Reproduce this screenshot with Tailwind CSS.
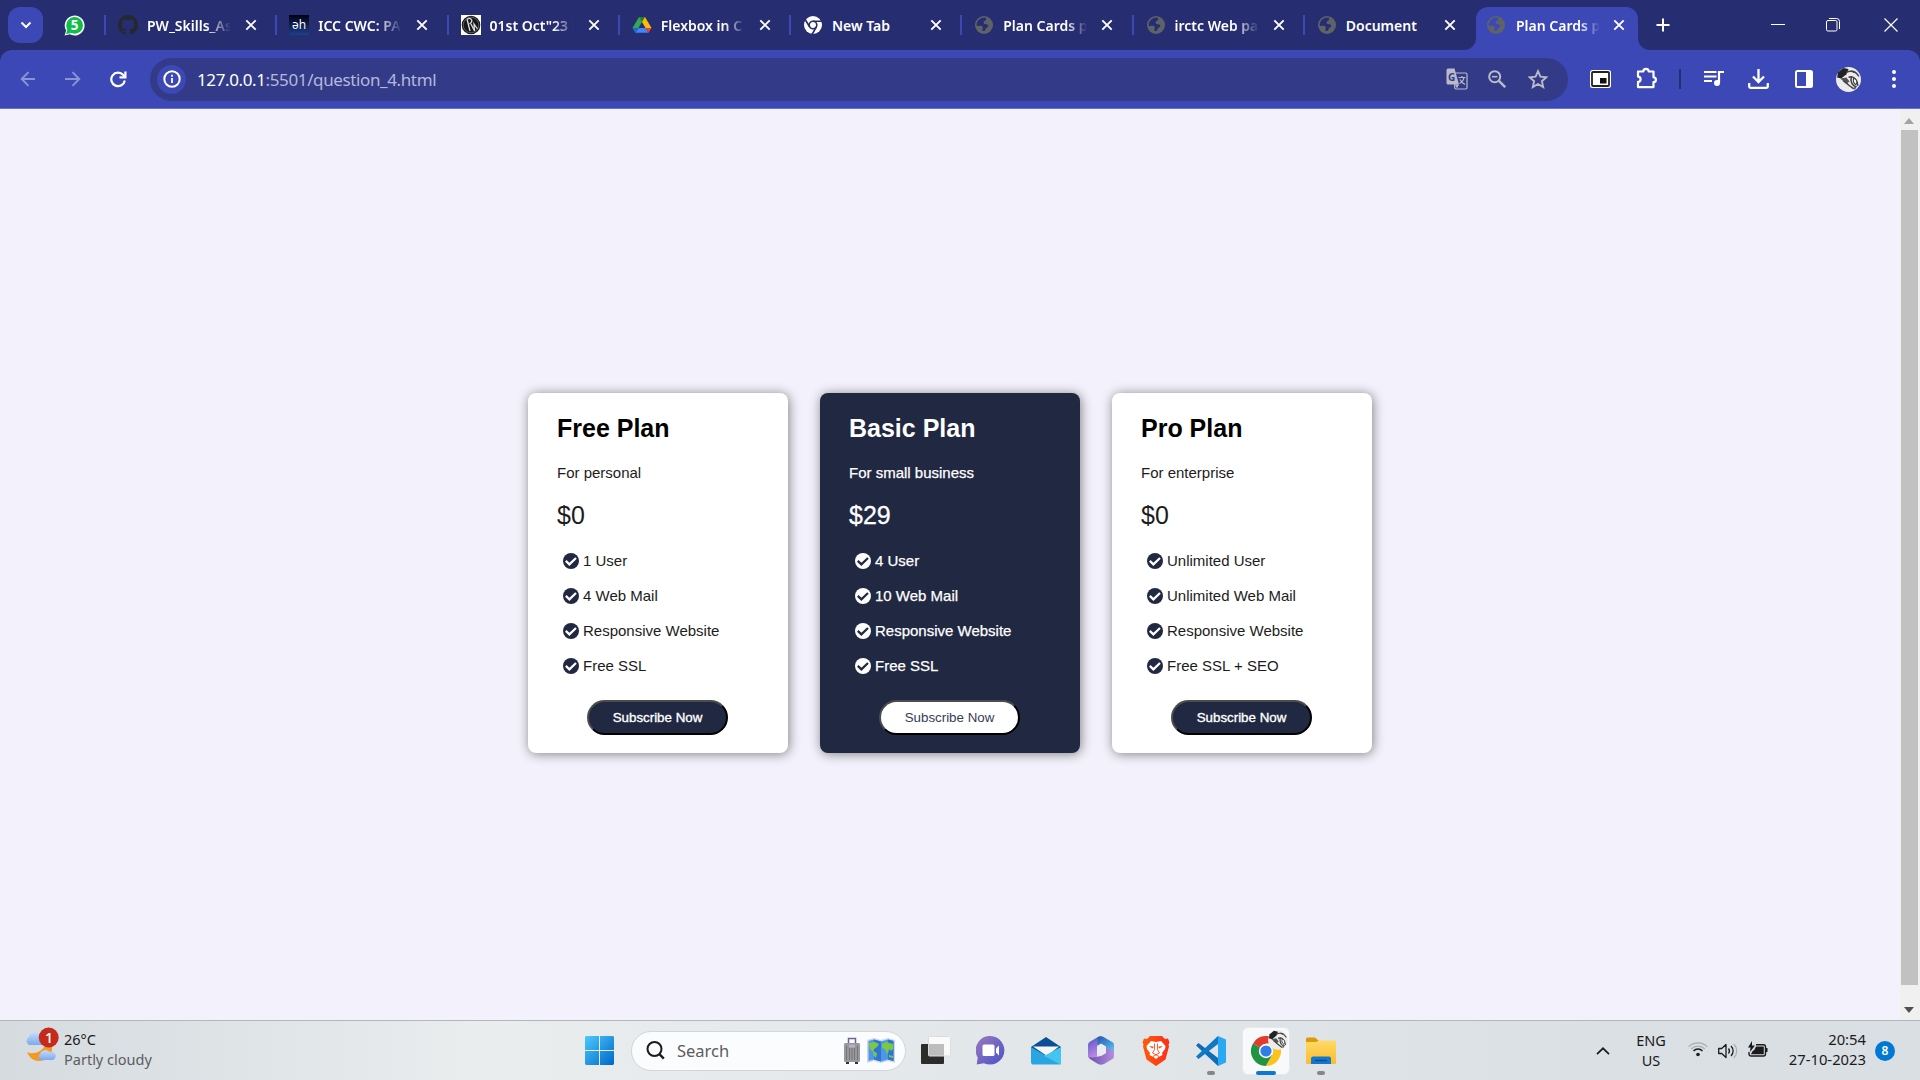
<!DOCTYPE html>
<html lang="en">
<head>
<meta charset="utf-8">
<title>Plan Cards page</title>
<script src="https://cdn.jsdelivr.net/npm/@tailwindcss/browser@4"></script>
</head>
<body class="w-[1920px] h-[1080px] overflow-hidden flex flex-col bg-[#f3f1fc] font-['Noto_Sans','Open_Sans',sans-serif]">

<svg class="hidden">
  <symbol id="x" viewBox="0 0 14 14"><path d="M2.300 2.300l9.400 9.400M11.700 2.300L2.300 11.700" stroke="#fff" stroke-width="1.900" fill="none"/></symbol>
  <symbol id="globe" viewBox="0 0 20 20"><circle cx="10" cy="10" r="9" fill="#5f6368"/><path d="M10 2.600a7.400 7.400 0 0 0-7.300 8.200c1.600.6 3-.3 4.800.2 1.500.4 1.700 1.700 1 2.900-.5.9-.3 1.900.9 2.100 1.600.2 2-1 2.300-2.200.4-1.500 2.300-1 2.600-2.700.2-1.400-.9-1.800-2.300-1.900-1.800-.1-2.600-.7-2.400-2 .2-1.200 1.800-1.100 2.400-2.100.4-.8.1-1.700-.3-2.300z" fill="var(--land)"/></symbol>
  <symbol id="check" viewBox="0 0 16 16"><circle cx="8" cy="8" r="8" fill="currentColor"/><path d="M2.800 7.900l3.600 3.500L13 5" fill="none" stroke="var(--tick)" stroke-width="2.200"/></symbol>
  <symbol id="ball" viewBox="0 0 24 24"><circle cx="12" cy="12" r="12" fill="#ececec"/><path d="M2 5l5-4 5 1-2 5-5 4-4-1z" fill="#222"/><path d="M4 11l6-1 3 4-3 2zM14 3l5 1-2 2zM17 20l4-3-3 5z" fill="#555"/><path d="M10 5c4-2 9-1 12 4M12 10c4-2 8 1 9 8M15 9c-2 5 1 9 4 10M7 13l6 5 4 3" fill="none" stroke="#444" stroke-width="1.500"/><path d="M17 11c3 0 4 4 2 6-2-1-3-4-2-6z" fill="#fff" stroke="#333"/></symbol>
</svg>

<!-- Tab strip -->
<header class="h-[50px] shrink-0 bg-[#262d70] flex text-white text-[14px] font-semibold [--land:#262d70]">
  <div class="w-[104px] flex items-center pl-2">
    <div class="w-[35px] h-9 rounded-xl bg-[#3b48b6] flex items-center justify-center"><svg class="w-3 h-3" viewBox="0 0 12 12"><path d="M1.500 3.500L6 8l4.500-4.500" fill="none" stroke="#fff" stroke-width="2"/></svg></div>
    <svg class="w-[21px] h-[21px] ml-[21px]" viewBox="0 0 21 21"><path d="M10.500.5a10 10 0 1 1-4.700 18.800L.6 20.500l1.500-4.900A10 10 0 0 1 10.500.5z" fill="#fff"/><circle cx="10.600" cy="10.400" r="8.400" fill="#12bd4a"/><path d="M2 19l1.500-5 4 4z" fill="#12bd4a"/><text x="10.600" y="15.300" font-size="13.500" font-weight="700" text-anchor="middle" fill="#fff" font-family="Open Sans">5</text></svg>
  </div>
  <div class="w-[171.25px] flex items-center"><i class="w-[2px] h-5 bg-[#3b48b6]"></i>
    <svg class="w-5 h-5 ml-3" viewBox="0 0 16 16"><path fill="#24292f" d="M8 0C3.580 0 0 3.580 0 8c0 3.540 2.290 6.530 5.470 7.590.4.070.55-.17.55-.38v-1.330c-2.230.48-2.700-1.070-2.700-1.070-.36-.92-.89-1.170-.89-1.170-.73-.5.050-.49.050-.49.800.06 1.230.83 1.230.83.720 1.220 1.870.87 2.330.66.070-.52.280-.87.510-1.070-1.780-.2-3.640-.89-3.640-3.950 0-.87.310-1.590.82-2.150-.08-.2-.36-1.020.08-2.120 0 0 .67-.21 2.200.82a7.600 7.600 0 0 1 4 0c1.530-1.040 2.200-.82 2.200-.82.440 1.100.160 1.920.080 2.120.510.560.820 1.270.820 2.150 0 3.070-1.870 3.750-3.650 3.950.290.250.540.730.540 1.480v2.160c0 .21.150.46.550.38A8 8 0 0 0 8 0z"/></svg>
    <span class="ml-[9px] w-[84px] overflow-hidden whitespace-nowrap mask-r-from-70% mask-r-to-100%">PW_Skills_As</span><svg class="w-[14px] h-[14px] ml-[13px]"><use href="#x"/></svg></div>
  <div class="w-[171.25px] flex items-center"><i class="w-[2px] h-5 bg-[#3b48b6]"></i>
    <svg class="w-5 h-5 ml-3" viewBox="0 0 20 20"><defs><linearGradient id="dh" x2="0" y2="1"><stop stop-color="#000016"/><stop offset="1" stop-color="#1d3f8a"/></linearGradient></defs><rect width="20" height="20" fill="url(#dh)"/><text x="10" y="14" font-size="12" font-weight="400" text-anchor="middle" fill="#fff" font-family="Open Sans">əh</text></svg>
    <span class="ml-[9px] w-[84px] overflow-hidden whitespace-nowrap mask-r-from-70% mask-r-to-100%">ICC CWC: PA</span><svg class="w-[14px] h-[14px] ml-[13px]"><use href="#x"/></svg></div>
  <div class="w-[171.25px] flex items-center"><i class="w-[2px] h-5 bg-[#3b48b6]"></i>
    <svg class="w-5 h-5 ml-3" viewBox="0 0 20 20"><rect width="20" height="20" fill="#fff"/><circle cx="10" cy="10" r="9.300" fill="#151719"/><path d="M6 4l3 12M6 4c4-2 7 2 2.500 5M10 9l3.500 7L13 9l3.500 5" stroke="#ddd" fill="none" stroke-width="1.300"/><circle cx="10" cy="10" r="7.800" fill="none" stroke="#8a8c8e" stroke-width=".6"/></svg>
    <span class="ml-[9px] w-[84px] overflow-hidden whitespace-nowrap mask-r-from-75% mask-r-to-100%">01st Oct"23 I</span><svg class="w-[14px] h-[14px] ml-[13px]"><use href="#x"/></svg></div>
  <div class="w-[171.25px] flex items-center"><i class="w-[2px] h-5 bg-[#3b48b6]"></i>
    <svg class="w-5 h-5 ml-3" viewBox="0 0 20 20"><path d="M7 2h6l6.500 11h-6z" fill="#fbbc04"/><path d="M7 2L.5 13l3 4.800L10 7z" fill="#34a853"/><path d="M7 2h6l-3 5z" fill="#188038"/><path d="M6.600 13h7l2.900 4.800h-13z" fill="#4285f4"/><path d="M.5 13h6.100l-3.100 4.800z" fill="#1967d2"/><path d="M13.500 13h6l-3 4.800z" fill="#ea4335"/></svg>
    <span class="ml-[9px] w-[84px] overflow-hidden whitespace-nowrap mask-r-from-75% mask-r-to-100%">Flexbox in C</span><svg class="w-[14px] h-[14px] ml-[13px]"><use href="#x"/></svg></div>
  <div class="w-[171.25px] flex items-center"><i class="w-[2px] h-5 bg-[#3b48b6]"></i>
    <svg class="w-5 h-5 ml-3" viewBox="0 0 20 20"><circle cx="10" cy="10" r="9" fill="#fff"/><circle cx="10" cy="10" r="3.800" fill="none" stroke="#262d70" stroke-width="1.600"/><path d="M10 6.200h9M6.700 12L2.200 4.500M13.300 12L9 19.500" stroke="#262d70" stroke-width="1.600"/></svg>
    <span class="ml-[9px] w-[84px] whitespace-nowrap">New Tab</span><svg class="w-[14px] h-[14px] ml-[13px]"><use href="#x"/></svg></div>
  <div class="w-[171.25px] flex items-center"><i class="w-[2px] h-5 bg-[#3b48b6]"></i>
    <svg class="w-5 h-5 ml-3"><use href="#globe"/></svg>
    <span class="ml-[9px] w-[84px] overflow-hidden whitespace-nowrap mask-r-from-75% mask-r-to-100%">Plan Cards p</span><svg class="w-[14px] h-[14px] ml-[13px]"><use href="#x"/></svg></div>
  <div class="w-[171.25px] flex items-center"><i class="w-[2px] h-5 bg-[#3b48b6]"></i>
    <svg class="w-5 h-5 ml-3"><use href="#globe"/></svg>
    <span class="ml-[9px] w-[84px] overflow-hidden whitespace-nowrap mask-r-from-70% mask-r-to-100%">irctc Web pa</span><svg class="w-[14px] h-[14px] ml-[13px]"><use href="#x"/></svg></div>
  <div class="w-[171.25px] flex items-center"><i class="w-[2px] h-5 bg-[#3b48b6]"></i>
    <svg class="w-5 h-5 ml-3"><use href="#globe"/></svg>
    <span class="ml-[9px] w-[84px] whitespace-nowrap">Document</span><svg class="w-[14px] h-[14px] ml-[13px]"><use href="#x"/></svg></div>
  <div class="relative w-[162px] ml-[2px] mt-[7px] h-[43px] pb-[7px] rounded-t-xl bg-[#3b48b6] flex items-center [--land:#3b48b6]">
    <svg class="absolute -left-3 bottom-0 w-3 h-3"><path d="M12 0v12H0A12 12 0 0 0 12 0" fill="#3b48b6"/></svg>
    <svg class="absolute -right-3 bottom-0 w-3 h-3"><path d="M0 0v12h12A12 12 0 0 1 0 0" fill="#3b48b6"/></svg>
    <svg class="w-5 h-5 ml-[10px]"><use href="#globe"/></svg>
    <span class="ml-[10px] w-[84px] overflow-hidden whitespace-nowrap mask-r-from-75% mask-r-to-100%">Plan Cards p</span><svg class="w-[14px] h-[14px] ml-[12px]"><use href="#x"/></svg></div>
  <svg class="w-[14px] h-[14px] ml-[18px] mt-[18px]" viewBox="0 0 14 14"><path d="M7 .5v13M.5 7h13" stroke="#fff" stroke-width="2"/></svg>
  <svg class="w-[14px] h-[14px] ml-[101px] mt-[18px]" viewBox="0 0 14 14"><path d="M0 6.500h14" stroke="#fff"/></svg>
  <svg class="w-[14px] h-[14px] ml-[41px] mt-[18px]" viewBox="0 0 14 14"><rect x=".5" y="2.500" width="10.500" height="10.500" rx="1.500" fill="none" stroke="#fff"/><path d="M3 .5h7.500a3 3 0 0 1 3 3V11" fill="none" stroke="#fff"/></svg>
  <svg class="w-[14px] h-[14px] ml-[44px] mt-[18px]" viewBox="0 0 14 14"><path d="M.5.5l13 13M13.500.5l-13 13" stroke="#fff" stroke-width="1.200"/></svg>
</header>

<!-- Toolbar -->
<div class="h-[59px] shrink-0 bg-[#262d70]">
<div class="h-[59px] bg-[#3b48b6] rounded-t-xl border-b border-[#6a73c6] flex items-center">
  <svg class="w-4 h-4 ml-5" viewBox="0 0 16 16"><path d="M15 8H2M8.500 1.200L1.700 8l6.800 6.800" fill="none" stroke="#8d94d4" stroke-width="1.900"/></svg>
  <svg class="w-4 h-4 ml-[29px]" viewBox="0 0 16 16"><path d="M0 8h14M7.500 1.200L14.300 8l-6.800 6.800" fill="none" stroke="#8d94d4" stroke-width="1.900"/></svg>
  <svg class="w-[17px] h-[17px] ml-[29px]" viewBox="0 0 17 17"><path d="M14.800 9.500A6.800 6.800 0 1 1 13.300 4L15.500 6" fill="none" stroke="#fff" stroke-width="2.200"/><path d="M16.500.5v7h-7V5.300h4.800V.5z" fill="#fff"/></svg>
  <div class="ml-[23px] w-[1418px] h-[43px] rounded-full bg-[#333b88] flex items-center">
    <div class="ml-[7px] w-[29px] h-[29px] rounded-full bg-[#3b48b6] flex items-center justify-center"><svg class="w-[18px] h-[18px]" viewBox="0 0 18 18"><circle cx="9" cy="9" r="7.700" fill="none" stroke="#fff" stroke-width="2"/><path d="M9 8v5M9 4.800v2" stroke="#fff" stroke-width="1.800"/></svg></div>
    <span class="ml-[11px] mt-[2px] w-[1240px] text-[17px] tracking-[-0.38px] text-[#b4b8dc]"><span class="text-white">127.0.0.1</span>:5501/question_4.html</span>
    <svg class="w-[22px] h-[22px] ml-[9px]" viewBox="0 0 22 22"><rect x="8.700" y="5" width="12.300" height="16" rx="1.200" fill="none" stroke="#b9bbc8" stroke-width="1.200"/><path d="M2 .5h6.500L13 16.500H2A1.500 1.500 0 0 1 .5 15V2A1.500 1.500 0 0 1 2 .5z" fill="#b9bbc8"/><path d="M9 16.500h4l-2 4z" fill="#b9bbc8"/><text x="5.600" y="12.500" font-size="10" font-weight="700" text-anchor="middle" fill="#333b88" font-family="Open Sans">G</text><path d="M12.500 9.500h7M16 8v1.500M18 9.500c-.5 3-2.500 5-4.500 6M14 11.500c1 2 3 4 5 5" stroke="#b9bbc8" stroke-width="1.200" fill="none"/></svg>
    <svg class="w-[18px] h-[18px] ml-[20px]" viewBox="0 0 18 18"><circle cx="6.700" cy="6.700" r="5.500" fill="none" stroke="#b9bbc8" stroke-width="2"/><path d="M4 6.700h5.400" stroke="#b9bbc8" stroke-width="1.600"/><path d="M10.700 10.700l6.500 6.500" stroke="#b9bbc8" stroke-width="2.400"/></svg>
    <svg class="w-5 h-5 ml-[22px]" viewBox="0 0 20 20"><path d="M10 2.200l2.400 5.500 6 .5-4.500 4 1.300 5.900L10 15l-5.200 3.100 1.300-5.900-4.500-4 6-.5z" fill="none" stroke="#b9bbc8" stroke-width="1.900"/></svg>
  </div>
  <svg class="w-[21px] h-[18px] ml-[22px]" viewBox="0 0 21 18"><rect width="21" height="18" rx="2.500" fill="#fff"/><rect x="2" y="2" width="17" height="14" rx="1" fill="#fff" stroke="#222" stroke-width="1.800"/><rect x="10" y="8" width="6.500" height="5.500" fill="#111"/></svg>
  <svg class="w-[22px] h-[22px] ml-[25px] -mt-[2px]" viewBox="0 0 22 22"><path d="M2 4.500h5.300a2.700 2.700 0 1 1 5.400 0h4.800v5.800a2.400 2.400 0 1 1 0 4.800v5H2v-5.300a2.600 2.600 0 0 0 0-5.200z" fill="none" stroke="#fff" stroke-width="2.200" stroke-linejoin="round"/></svg>
  <i class="ml-[21px] w-[2px] h-5 bg-[#262d70]"></i>
  <svg class="w-5 h-[18px] ml-[23px] -mt-[3px]" viewBox="0 0 20 18"><path d="M0 3h12.500M0 7.500h12.500M0 12h8" stroke="#fff" stroke-width="2"/><circle cx="13" cy="14" r="3" fill="#fff"/><path d="M15 14V3h5" stroke="#fff" stroke-width="2.200" fill="none"/></svg>
  <svg class="w-[21px] h-5 ml-[24px]" viewBox="0 0 21 20"><path d="M10.500 0v12M5 7.500l5.500 5.500L16 7.500M1.200 14v3.500c0 .8.500 1.300 1.300 1.300h16c.8 0 1.300-.5 1.300-1.300V14" fill="none" stroke="#fff" stroke-width="2.300"/></svg>
  <svg class="w-[18px] h-[18px] ml-[26px]" viewBox="0 0 18 18"><rect x="1" y="1" width="16" height="16" rx="1.500" fill="none" stroke="#fff" stroke-width="2"/><path d="M11 1h6v16h-6z" fill="#fff"/></svg>
  <svg class="w-[25px] h-[25px] ml-[23px]"><use href="#ball"/></svg>
  <svg class="w-1 h-[18px] ml-[31px]" viewBox="0 0 4 18"><g fill="#fff"><circle cx="2" cy="2" r="2"/><circle cx="2" cy="9" r="2"/><circle cx="2" cy="16" r="2"/></g></svg>
</div>
</div>

<!-- Page -->
<div class="h-[911px] shrink-0 flex">
  <main class="w-[1900px] pt-[284px] flex justify-center items-start gap-8 font-['Liberation_Sans',Arial,sans-serif] text-[15px] text-black">
    <section class="w-[260px] h-[360px] rounded-lg bg-white shadow-[1px_1px_12px_gray] pl-[29px] [--tick:#fff]">
      <h2 class="mt-[21px] text-[25px] leading-7 font-bold">Free Plan</h2>
      <p class="mt-[22px] leading-[18px] text-[#1c1c1c]">For personal</p>
      <p class="mt-[19px] text-[25px] leading-7 text-[#1c1c1c]">$0</p>
      <ul class="mt-[14px] ml-[6px] text-[#1c1c1c]">
        <li class="h-[35px] pt-[2px] flex items-center gap-1"><svg class="w-4 h-4 mb-[2px] text-[#212842]"><use href="#check"/></svg>1 User</li>
        <li class="h-[35px] pt-[2px] flex items-center gap-1"><svg class="w-4 h-4 mb-[2px] text-[#212842]"><use href="#check"/></svg>4 Web Mail</li>
        <li class="h-[35px] pt-[2px] flex items-center gap-1"><svg class="w-4 h-4 mb-[2px] text-[#212842]"><use href="#check"/></svg>Responsive Website</li>
        <li class="h-[35px] pt-[2px] flex items-center gap-1"><svg class="w-4 h-4 mb-[2px] text-[#212842]"><use href="#check"/></svg>Free SSL</li>
      </ul>
      <button class="block mt-[17px] ml-[30px] w-[141px] h-[35px] rounded-[20px] border-2 border-t-[#4c4c4c] border-l-[#4c4c4c] border-r-black border-b-black bg-[#212842] text-white text-[13.333px] [-webkit-text-stroke:0.35px_white]">Subscribe Now</button>
    </section>
    <section class="w-[260px] h-[360px] rounded-lg bg-[#212842] text-white shadow-[1px_1px_12px_gray] pl-[29px] [--tick:#212842]">
      <h2 class="mt-[21px] text-[25px] leading-7 font-bold">Basic Plan</h2>
      <p class="mt-[22px] leading-[18px] [-webkit-text-stroke:0.25px_white]">For small business</p>
      <p class="mt-[19px] text-[25px] leading-7 [-webkit-text-stroke:0.3px_white]">$29</p>
      <ul class="mt-[14px] ml-[6px] [-webkit-text-stroke:0.25px_white]">
        <li class="h-[35px] pt-[2px] flex items-center gap-1"><svg class="w-4 h-4 mb-[2px]"><use href="#check"/></svg>4 User</li>
        <li class="h-[35px] pt-[2px] flex items-center gap-1"><svg class="w-4 h-4 mb-[2px]"><use href="#check"/></svg>10 Web Mail</li>
        <li class="h-[35px] pt-[2px] flex items-center gap-1"><svg class="w-4 h-4 mb-[2px]"><use href="#check"/></svg>Responsive Website</li>
        <li class="h-[35px] pt-[2px] flex items-center gap-1"><svg class="w-4 h-4 mb-[2px]"><use href="#check"/></svg>Free SSL</li>
      </ul>
      <button class="block mt-[17px] ml-[30px] w-[141px] h-[35px] rounded-[20px] border-2 border-t-[#4c4c4c] border-l-[#4c4c4c] border-r-black border-b-black bg-white text-[#363c55] text-[13.333px]">Subscribe Now</button>
    </section>
    <section class="w-[260px] h-[360px] rounded-lg bg-white shadow-[1px_1px_12px_gray] pl-[29px] [--tick:#fff]">
      <h2 class="mt-[21px] text-[25px] leading-7 font-bold">Pro Plan</h2>
      <p class="mt-[22px] leading-[18px] text-[#1c1c1c]">For enterprise</p>
      <p class="mt-[19px] text-[25px] leading-7 text-[#1c1c1c]">$0</p>
      <ul class="mt-[14px] ml-[6px] text-[#1c1c1c]">
        <li class="h-[35px] pt-[2px] flex items-center gap-1"><svg class="w-4 h-4 mb-[2px] text-[#212842]"><use href="#check"/></svg>Unlimited User</li>
        <li class="h-[35px] pt-[2px] flex items-center gap-1"><svg class="w-4 h-4 mb-[2px] text-[#212842]"><use href="#check"/></svg>Unlimited Web Mail</li>
        <li class="h-[35px] pt-[2px] flex items-center gap-1"><svg class="w-4 h-4 mb-[2px] text-[#212842]"><use href="#check"/></svg>Responsive Website</li>
        <li class="h-[35px] pt-[2px] flex items-center gap-1"><svg class="w-4 h-4 mb-[2px] text-[#212842]"><use href="#check"/></svg>Free SSL + SEO</li>
      </ul>
      <button class="block mt-[17px] ml-[30px] w-[141px] h-[35px] rounded-[20px] border-2 border-t-[#4c4c4c] border-l-[#4c4c4c] border-r-black border-b-black bg-[#212842] text-white text-[13.333px] [-webkit-text-stroke:0.35px_white]">Subscribe Now</button>
    </section>
  </main>
  <div class="w-5 pr-[2px] bg-[#f0f0f0] flex flex-col items-center">
    <svg class="w-[10px] h-[6px] mt-[9px]" viewBox="0 0 10 6"><path d="M5 0l5 6H0z" fill="#a3a3a3"/></svg>
    <div class="w-[17px] h-[855px] mt-[6px] bg-[#c1c1c1]"></div>
    <svg class="w-[10px] h-[6px] mt-[22px]" viewBox="0 0 10 6"><path d="M0 0h10L5 6z" fill="#505050"/></svg>
  </div>
</div>

<!-- Taskbar -->
<footer class="h-[60px] shrink-0 border-t border-[#b5b6bd] bg-linear-to-r from-[#d6dbe0] via-[#e9edee] to-[#dadfe4] from-0% via-25% to-90% flex items-center text-[#1b1b1b]">
  <div class="w-[585px] flex items-center pl-[24px]">
    <svg class="w-[35px] h-[36px] -mt-3" viewBox="0 0 35 36"><defs><linearGradient id="cl" x2="0" y2="1"><stop stop-color="#c5dcfb"/><stop offset="1" stop-color="#7ea9ee"/></linearGradient></defs><path d="M3 25c6 3 14 0 17-5l8-1c1 10-5 15-13 15-6 0-10-4-12-9z" fill="#f29a22"/><path d="M5 18a4.500 4.500 0 0 1 0-8 6 6 0 0 1 11-2l3 10z" fill="url(#cl)"/><path d="M16 33a4 4 0 0 1 0-6 6 6 0 0 1 10-2 4 4 0 0 1 3 8z" fill="url(#cl)"/><circle cx="24.700" cy="10.500" r="10" fill="#c42b1c"/><text x="25" y="15.500" font-size="14" text-anchor="middle" fill="#fff" font-weight="600" font-family="Open Sans">1</text></svg>
    <div class="ml-[5px] -mt-1 text-[14.500px] leading-5"><div>26°C</div><div class="text-[#5a5d60]">Partly cloudy</div></div>
  </div>
  <svg class="w-[29px] h-[29px]" viewBox="0 0 29 29"><defs><linearGradient id="win" x2="1" y2="1"><stop stop-color="#4cc9fb"/><stop offset="1" stop-color="#0067c8"/></linearGradient></defs><path d="M1 0h13v14H0V1zM15 0h13l1 1v13H15zM0 15h14v14H1l-1-1zM15 15h14v13l-1 1H15z" fill="url(#win)"/></svg>
  <div class="ml-[17px] w-[275px] h-10 rounded-full bg-[#fbfcfd] border border-[#d3d5d8] flex items-center">
    <svg class="ml-[14px] w-[19px] h-[19px]" viewBox="0 0 19 19"><circle cx="8.500" cy="8" r="7" fill="none" stroke="#1b1b1b" stroke-width="2"/><path d="M13.300 13l4.500 4.700" stroke="#1b1b1b" stroke-width="2.400"/></svg>
    <span class="ml-[12px] mt-px w-[167px] text-[16.500px] text-[#5c5c5c]">Search</span>
    <svg class="w-4 h-[27px]" viewBox="0 0 16 27"><path d="M4.500 6V1.500h7V6" fill="none" stroke="#6c6687" stroke-width="1.500"/><rect y="6" width="16" height="19" rx="1.500" fill="#98989c"/><path d="M2.500 9v14M5.500 11v12M8 11v12M10.500 11v12M13.500 9v14" stroke="#6e6e72" stroke-width=".8"/><path d="M5 7.500h6v3H5z" fill="#b9b0c9"/><path d="M2 25h3v2H2zM11 25h3v2h-3z" fill="#333"/></svg>
    <svg class="ml-[7px] w-[28px] h-[25px]" viewBox="0 0 28 25"><path d="M0 2l7-2 7 2 7-2 7 2v23l-7-2-7 2-7-2-7 2z" fill="#cfd6e4"/><path d="M1.500 3L7 1.500 14 3.500l7-2 5.500 1.500v20L21 21.500l-7 2-7-2-5.500 1.500z" fill="#4c97ea"/><path d="M7 1.500l7 2v20l-7-2zM21 1.500l5.500 1.500v20L21 21.500z" fill="#2f74d2"/><path d="M2 5l6-1 4 2-2 3-3 2-1 2 4 2-1 5-2-2-1-4-3-3-1-4zM15 6l4-2 7 2v5l-2 2-2-2-1 5-2-2-1-3-3-1zM22 17l4 1v2l-4-1z" fill="#7ac943"/></svg>
  </div>
  <svg class="ml-[15px] w-[31px] h-[29px]" viewBox="0 0 31 29"><rect y="8" width="23" height="20" rx="1" fill="#2c2c2a"/><rect x="8" y="0" width="22" height="20" rx="1" fill="#fafafa"/><path d="M8 8h15v12H8z" fill="#bdbdbd"/><rect x="7.500" y=".5" width="22" height="19.500" rx="1" fill="none" stroke="#dcdcdc"/></svg>
  <svg class="ml-6 w-[29px] h-[29px]" viewBox="0 0 29 29"><defs><linearGradient id="chat" x2="1" y2="1"><stop stop-color="#9a79bd"/><stop offset="1" stop-color="#4b53c8"/></linearGradient></defs><path d="M14.500 0a14.300 14.300 0 1 1-6.600 27.200L.7 28.500l1-7A14.300 14.300 0 0 1 14.500 0z" fill="url(#chat)"/><rect x="6.500" y="8.500" width="12" height="11.500" rx="1.500" fill="#fff"/><path d="M20 12.500l3-3v10l-3-3z" fill="#fff"/></svg>
  <svg class="ml-[26px] w-[30px] h-[28px]" viewBox="0 0 30 28"><path d="M0 10L15 0l15 10v8H0z" fill="#0b4f96"/><path d="M2 9.500h26L16 19z" fill="#f6f6f6"/><path d="M0 10l30 17.500H1.500L0 26z" fill="#2ba5e2"/><path d="M30 10L13 19l17 8.500z" fill="#42c6f0"/></svg>
  <svg class="ml-[26px] w-[28px] h-[29px]" viewBox="0 0 28 29"><defs><linearGradient id="ma" x2=".3" y2="1"><stop stop-color="#2755b4"/><stop offset=".4" stop-color="#7c6ad0"/><stop offset="1" stop-color="#c08ae8"/></linearGradient><linearGradient id="mb" x2=".6" y2="1"><stop stop-color="#2855b0"/><stop offset="1" stop-color="#58c4ee"/></linearGradient><linearGradient id="mc" x2="1" y2="0"><stop stop-color="#6b4fae"/><stop offset="1" stop-color="#b58de0"/></linearGradient></defs><path d="M14 0L10.500 1.200 2.500 6Q1 7 1 9v12l4 2 5-2.500V10l4-2.500z" fill="url(#ma)"/><path d="M10.500 1.200Q14-.6 17 1.200l8.500 5Q27 7 27 9v10l-8-4v-4.500L14 7.500 10.500 9z" fill="url(#mb)"/><path d="M1.500 21l4 .5 8.500-1.500 5-3V12l8 2.500v6Q27 22 25.500 23L17 28q-3 1.500-6 0l-8-5z" fill="url(#mc)"/><path d="M10 11l4.500-2.500 4.500 2.500v6l-4.500 2.500L10 17z" fill="#e9edef"/></svg>
  <svg class="ml-[27px] w-[28px] h-[30px]" viewBox="0 0 28 30"><defs><linearGradient id="br" x2="1"><stop stop-color="#ff5b0a"/><stop offset="1" stop-color="#fb2f1c"/></linearGradient></defs><path d="M8 0h12l3 3 3-.5 1.500 4-1 2 .5 2-3.500 13L14 30 4.500 23.500 1 10.500l.5-2-1-2L2 2.500 5 3z" fill="url(#br)"/><path d="M9 5l5 1 5-1 4.500 5-.5 3-3 4 .5 2-4 2L14 23l-2.500-2-4-2 .5-2-3-4-.5-3z" fill="#fff"/><path d="M7 10l5 .8-1.500 1.700zM21 10l-5 .8 1.500 1.700z" fill="#fb4a1c"/><path d="M12.500 7.500v6l-2 3.500 3.500 1.800 3.500-1.800-2-3.500v-6M11 20.500l3-1.700 3 1.700" fill="none" stroke="#fb4a1c" stroke-width=".9"/></svg>
  <div class="relative ml-[26px] h-[30px] w-[30px]"><svg class="w-[30px] h-[30px]" viewBox="0 0 30 30"><path d="M2.500 7L0 9.500 22 30V22z" fill="#0f6cb5"/><path d="M2.500 23L0 20.500 22 0v8z" fill="#1079c6"/><path d="M22 0l8 3.500v23L22 30z" fill="#2aa8f2"/></svg><i class="absolute left-[11px] top-[35px] w-2 h-1 rounded-full bg-[#868686]"></i></div>
  <div class="relative ml-4 w-12 h-12 rounded-md bg-[#f7f9fa] border border-[#e6e8ea] flex items-center justify-center">
    <svg class="w-[30px] h-[30px]" viewBox="0 0 30 30"><path d="M15 15L2 7.500A15 15 0 0 1 28 7.500H15z" fill="#e33b2e"/><path d="M15 15L2 7.500A15 15 0 0 0 15 30l6.500-11.250z" fill="#229342"/><path d="M15 7.500h13A15 15 0 0 1 15 30l6.500-11.250z" fill="#fcc31e"/><circle cx="15" cy="15" r="7.200" fill="#fff"/><circle cx="15" cy="15" r="5.600" fill="#2f7de9"/></svg>
    <svg class="absolute left-[25px] top-[2px] w-5 h-5"><use href="#ball"/></svg><i class="absolute left-[13px] top-[43px] w-5 h-1 rounded-full bg-[#0a78d4]"></i></div>
  <div class="relative ml-4 h-[27px] w-[30px]"><svg class="w-[30px] h-[27px]" viewBox="0 0 30 27"><defs><linearGradient id="fo" x2="0" y2="1"><stop stop-color="#ffd968"/><stop offset="1" stop-color="#fbbd2d"/></linearGradient></defs><path d="M0 2a1.500 1.500 0 0 1 1.500-1.500H9L13 4v5H0z" fill="#dc9a08"/><path d="M0 5h10l3-1.500h16a1 1 0 0 1 1 1V26a1 1 0 0 1-1 1H1a1 1 0 0 1-1-1z" fill="url(#fo)"/><path d="M5 27v-5.500a2 2 0 0 1 2-2h16a2 2 0 0 1 2 2V27z" fill="#1476cc"/><path d="M9 23.500h12" stroke="#0b4c8c" stroke-width="1.300"/></svg><i class="absolute left-[11px] top-[34px] w-2 h-1 rounded-full bg-[#868686]"></i></div>
  <svg class="ml-[260px] w-[14px] h-2" viewBox="0 0 14 8"><path d="M1 7.200L7 1.300l6 5.900" fill="none" stroke="#1b1b1b" stroke-width="1.700"/></svg>
  <div class="ml-[25px] -mt-[2px] w-[32px] text-center text-[14.500px] leading-5">ENG<br>US</div>
  <svg class="ml-[21px] w-5 h-4 -mt-[3px]" viewBox="0 0 20 16"><circle cx="10" cy="13.500" r="1.800" fill="#1b1b1b"/><path d="M5.500 10a6.200 6.200 0 0 1 9 0" fill="none" stroke="#1b1b1b" stroke-width="1.500"/><path d="M.7 5.800a13 13 0 0 1 18.600 0M3.200 8a9.500 9.500 0 0 1 13.600 0" fill="none" stroke="#a9adb0" stroke-width="1.200"/></svg>
  <svg class="ml-[10px] w-5 h-4" viewBox="0 0 20 16"><path d="M.7 5.500h3L8 1.500v13L3.700 10.500h-3z" fill="none" stroke="#1b1b1b" stroke-width="1.300" stroke-linejoin="round"/><path d="M10.500 5.500a4 4 0 0 1 0 5M13 3a7 7 0 0 1 0 10" fill="none" stroke="#1b1b1b" stroke-width="1.300"/><path d="M15.800 1a10 10 0 0 1 0 14" fill="none" stroke="#a9adb0" stroke-width="1.200"/></svg>
  <svg class="ml-[10px] w-5 h-[17px] -mt-[2px]" viewBox="0 0 20 17"><path d="M8 3.800h7.500a2 2 0 0 1 2 2V13a2 2 0 0 1-2 2H3a2 2 0 0 1-2-2v-2" fill="none" stroke="#1b1b1b" stroke-width="1.400"/><path d="M8 5.500h7.800v7.800H2.800L5 9.500h1z" fill="#1b1b1b"/><path d="M18 7h1.500v4H18zM4 0L0 6.500h2.500L2 11l5-6.500H4z" fill="#1b1b1b"/></svg>
  <div class="w-[98px] -mt-[3px] text-right text-[14.800px] leading-5">20:54<br>27-10-2023</div>
  <div class="ml-[9px] w-5 h-5 rounded-full bg-[#0078d4] text-white text-xs font-semibold flex items-center justify-center">8</div>
</footer>
</body>
</html>
